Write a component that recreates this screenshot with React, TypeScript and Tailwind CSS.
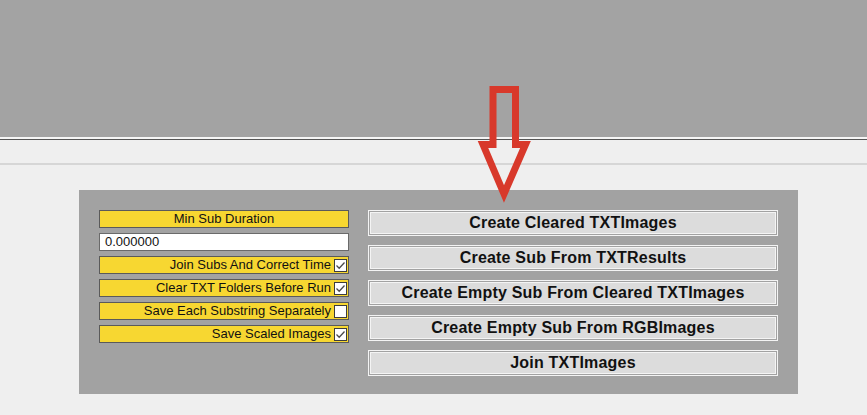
import React from 'react'

const options = [
  { label: 'Join Subs And Correct Time', checked: true },
  { label: 'Clear TXT Folders Before Run', checked: true },
  { label: 'Save Each Substring Separately', checked: false },
  { label: 'Save Scaled Images', checked: true },
]

const actions = [
  'Create Cleared TXTImages',
  'Create Sub From TXTResults',
  'Create Empty Sub From Cleared TXTImages',
  'Create Empty Sub From RGBImages',
  'Join TXTImages',
]

function CheckBox({ checked }: { checked: boolean }) {
  return (
    <span className="ml-[3px] mr-px flex h-[13px] w-[13px] shrink-0 items-center justify-center border border-[#3c3c3c] bg-white">
      {checked && (
        <svg width="11" height="11" viewBox="0 0 11 11">
          <path d="M1.5 5.5 L4.2 8.2 L9.5 2.5" fill="none" stroke="#4a4a4a" strokeWidth="1.3" />
        </svg>
      )}
    </span>
  )
}

export default function App() {
  return (
    <div className="relative min-h-[415px] w-full overflow-hidden bg-[#efefef] font-['Liberation_Sans',Arial,sans-serif]">
      <div className="h-[137px] bg-[#a3a3a3]" />
      <div className="h-[2px] bg-[#f6f6f6]" />
      <div className="h-[1px] bg-[#555555]" />
      <div className="h-[23px]" />
      <div className="h-[2px] bg-[#d6d6d6]" />

      <div className="mt-[25px] ml-[79px] flex w-[719px] gap-[19px] bg-[#a2a2a2] pt-[20px] pr-[20px] pb-[18px] pl-[20px]">
        <div className="flex w-[250px] flex-col gap-[5px]">
          <div className="flex h-[18px] items-center justify-center border border-[#5a5a5a] bg-[#f7d731] text-[13px] text-[#111]">
            Min Sub Duration
          </div>
          <div className="flex h-[18px] items-center border border-[#6a6a6a] bg-white pl-[5px] text-[13px] text-[#111]">
            0.000000
          </div>
          {options.map((o) => (
            <div
              key={o.label}
              className="flex h-[18px] items-center justify-end border border-[#5a5a5a] bg-[#f7d731] text-[13px] text-[#111]"
            >
              <span>{o.label}</span>
              <CheckBox checked={o.checked} />
            </div>
          ))}
        </div>

        <div className="flex w-[410px] flex-col gap-[9px]">
          {actions.map((a) => (
            <button
              key={a}
              type="button"
              className="flex h-[26px] items-center justify-center border-[3px] border-double border-[#f4f4f4] bg-[#dcdcdc] bg-clip-padding text-[16px] font-bold tracking-[0.2px] text-[#111]"
            >
              {a}
            </button>
          ))}
        </div>
      </div>

      <svg
        className="pointer-events-none absolute top-0 left-0"
        width="867"
        height="415"
        viewBox="0 0 867 415"
      >
        <path
          d="M493 144.5 L493 89.5 L515.5 89.5 L515.5 144.5 L525.5 144.5 L504 194 L483 144.5 Z"
          fill="none"
          stroke="#d8392b"
          strokeWidth="7"
          strokeLinejoin="miter"
        />
      </svg>
    </div>
  )
}
